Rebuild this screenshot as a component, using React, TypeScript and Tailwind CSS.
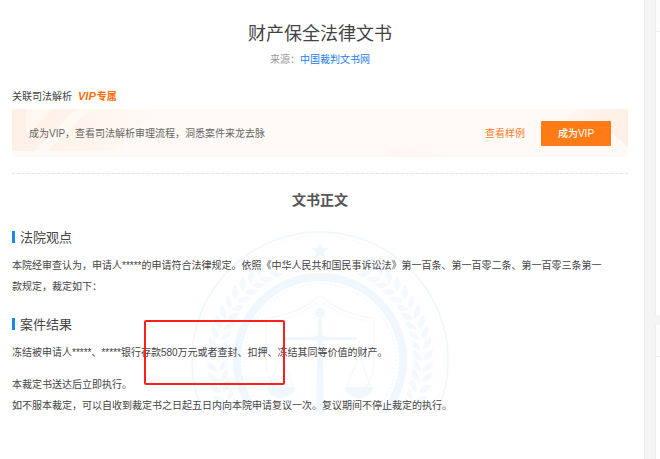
import type { ReactNode } from "react";

const LEAF_ANGLES = [-62, -56, -50, -44, -38, -32, -26, -20, -14, -8, -2, 4, 10, 16, 22, 28];

function LeafPair() {
  return (
    <>
      <path d="M103 4C104-1 107-5 113-7C113 0 110 4 103 4z" />
      <path d="M102 4C101-1 98-5 93-7C92 0 96 4 102 4z" />
    </>
  );
}

function CourtSeal() {
  return (
    <svg
      viewBox="0 0 260 182"
      aria-hidden="true"
      className="absolute left-1/2 top-5 -z-10 h-[182px] w-[260px] -translate-x-1/2"
      fill="none"
      stroke="#f0f7fd"
    >
      {/* Rings */}
      <circle cx="130" cy="129" r="128" strokeWidth="2" />
      <circle cx="130" cy="129" r="124" stroke="#f9fcfe" />
      <circle cx="130" cy="129" r="83" strokeWidth="8" />
      <circle cx="130" cy="129" r="76" strokeWidth="2" strokeDasharray="1 3" />

      {/* Star */}
      <path
        d="M130 11l2.4 5.6 6.1.5-4.6 4 1.4 6-5.3-3.2-5.3 3.2 1.4-6-4.6-4 6.1-.5z"
        fill="#f0f7fd"
        stroke="none"
      />

      {/* Laurel */}
      <g fill="#f3f9fe" stroke="none">
        {LEAF_ANGLES.map((a) => (
          <g key={a}>
            <g transform={`translate(130 129) rotate(${a})`}>
              <LeafPair />
            </g>
            <g transform={`translate(130 129) scale(-1 1) rotate(${a})`}>
              <LeafPair />
            </g>
          </g>
        ))}
      </g>

      {/* Shield */}
      <path d="M130 64C116 77 98 85 76 87V128C76 151 88 168 108 182M130 64C144 77 162 85 184 87V128C184 151 172 168 152 182" />
      <path stroke="#f6fafe" d="M130 69C117 80 100 88 80 90V126M130 69C143 80 160 88 180 90V126" />

      {/* Scales */}
      <g fill="#f0f7fd" stroke="none">
        <circle cx="130" cy="82" r="5" />
        <path d="M128 88h4l2 94h-8z" />
        <path d="M93 106h30l7-3 7 3h30v3h-30l-7 2-7-2H93z" />
        <path d="M77 156h28c-1 7-6 11-14 11s-13-4-14-11zM155 156h28c-1 7-6 11-14 11s-13-4-14-11z" />
      </g>
      <path d="M91 109v15l-12 32M91 124l12 32M169 109v15l-12 32M169 124l12 32" />
    </svg>
  );
}

function VipBanner() {
  return (
    <div className="relative isolate flex h-12 items-center bg-[#fffaf6] px-[17px]">
      <svg
        viewBox="0 0 616 48"
        preserveAspectRatio="none"
        aria-hidden="true"
        className="absolute inset-0 -z-10 h-full w-full"
      >
        <defs>
          <linearGradient id="bannerLeft" x1="0" y1="0" x2="1" y2="0">
            <stop offset="0" stopColor="#fff0e6" />
            <stop offset="1" stopColor="#fff9f4" />
          </linearGradient>
          <linearGradient id="bannerRight" x1="0" y1="0" x2="1" y2="0">
            <stop offset="0" stopColor="#fff8f2" />
            <stop offset="1" stopColor="#ffefe5" />
          </linearGradient>
        </defs>
        <path d="M0 0h145l-42 42H0z" fill="url(#bannerLeft)" />
        <path d="M14 0h26L14 28z" fill="#fff7f1" />
        <path d="M22 42L64 0h14L36 42z" fill="#fff8f3" />
        <path d="M370 48l13-13 58 13z" fill="#fff7f1" />
        <path d="M550 14l14-14h52v38l-17-14V14z" fill="url(#bannerRight)" />
      </svg>
      <p className="flex-1 text-[10px] text-[#666]">成为VIP，查看司法解析审理流程，洞悉案件来龙去脉</p>
      <a href="#sample" className="mr-4 text-[10px] text-[#ff7d2a]">
        查看样例
      </a>
      <button
        type="button"
        className="h-[25px] w-[70px] rounded-[1px] bg-[#ff7b16] text-[10px] font-medium text-white"
      >
        成为VIP
      </button>
    </div>
  );
}

function SectionTitle({ children }: { children: ReactNode }) {
  return (
    <h3 className="flex h-5 items-center gap-[5px] text-[13px] text-[#444]">
      <span className="h-3 w-[3px] bg-[#128bed]" />
      {children}
    </h3>
  );
}

export default function App() {
  return (
    <div className="flex min-h-screen bg-[#f5f5f5] font-['Liberation_Sans','Noto_Sans_CJK_SC',sans-serif]">
      <main className="min-w-0 flex-1 bg-white pl-3 pr-4">
        {/* Heading */}
        <header className="pt-5 text-center">
          <h1 className="text-[18px] leading-7 text-[#444]">财产保全法律文书</h1>
          <p className="mt-1 text-[10px] leading-4 text-[#999]">
            来源：
            <a href="#source" className="text-[#2680f0]">
              中国裁判文书网
            </a>
          </p>
        </header>

        {/* Related analysis */}
        <section className="mt-[19px] border-b border-dashed border-[#e2e2e2] pb-4">
          <h2 className="mb-1 flex h-[18px] items-center gap-[6px] text-[10px] text-[#444]">
            关联司法解析
            <span className="flex items-center gap-px font-bold text-[#ff6d0a]">
              <i className="text-[11px]">VIP</i>
              专属
            </span>
          </h2>
          <VipBanner />
        </section>

        {/* Document body */}
        <article className="relative isolate text-[10px] leading-[21px] text-[#444]">
          <h2 className="pt-4 text-center text-[14px] font-bold text-[#555]">文书正文</h2>
          <div className="relative">
            <CourtSeal />
            <div className="pt-4">
              <SectionTitle>法院观点</SectionTitle>
              <p className="mt-2">
                本院经审查认为，申请人*****的申请符合法律规定。依照《中华人民共和国民事诉讼法》第一百条、第一百零二条、第一百零三条第一
                <br />
                款规定，裁定如下：
              </p>
            </div>
            <div className="mt-[17px]">
              <SectionTitle>案件结果</SectionTitle>
              <p className="mt-2">冻结被申请人*****、*****银行存款580万元或者查封、扣押、冻结其同等价值的财产。</p>
              <p className="mt-[11px]">
                本裁定书送达后立即执行。
                <br />
                如不服本裁定，可以自收到裁定书之日起五日内向本院申请复议一次。复议期间不停止裁定的执行。
              </p>
            </div>
            {/* Highlight over the frozen amount */}
            <div className="pointer-events-none absolute left-[132px] top-[109px] h-[65px] w-[141px] rounded-[2px] border-2 border-[#fa2020]" />
          </div>
        </article>
      </main>

      {/* Edge of the side column */}
      <aside className="flex w-4 flex-col gap-[10px] border-l border-[#eee] pl-[10px]">
        <div className="h-[315px] border-l border-[#eee] bg-white">
          <div className="h-8 border-b border-[#eee] bg-[#fcfcfc]" />
        </div>
        <div className="flex-1 border-l border-[#eee] bg-white">
          <div className="h-8 border-b border-[#eee] bg-[#fcfcfc]" />
        </div>
      </aside>
    </div>
  );
}
